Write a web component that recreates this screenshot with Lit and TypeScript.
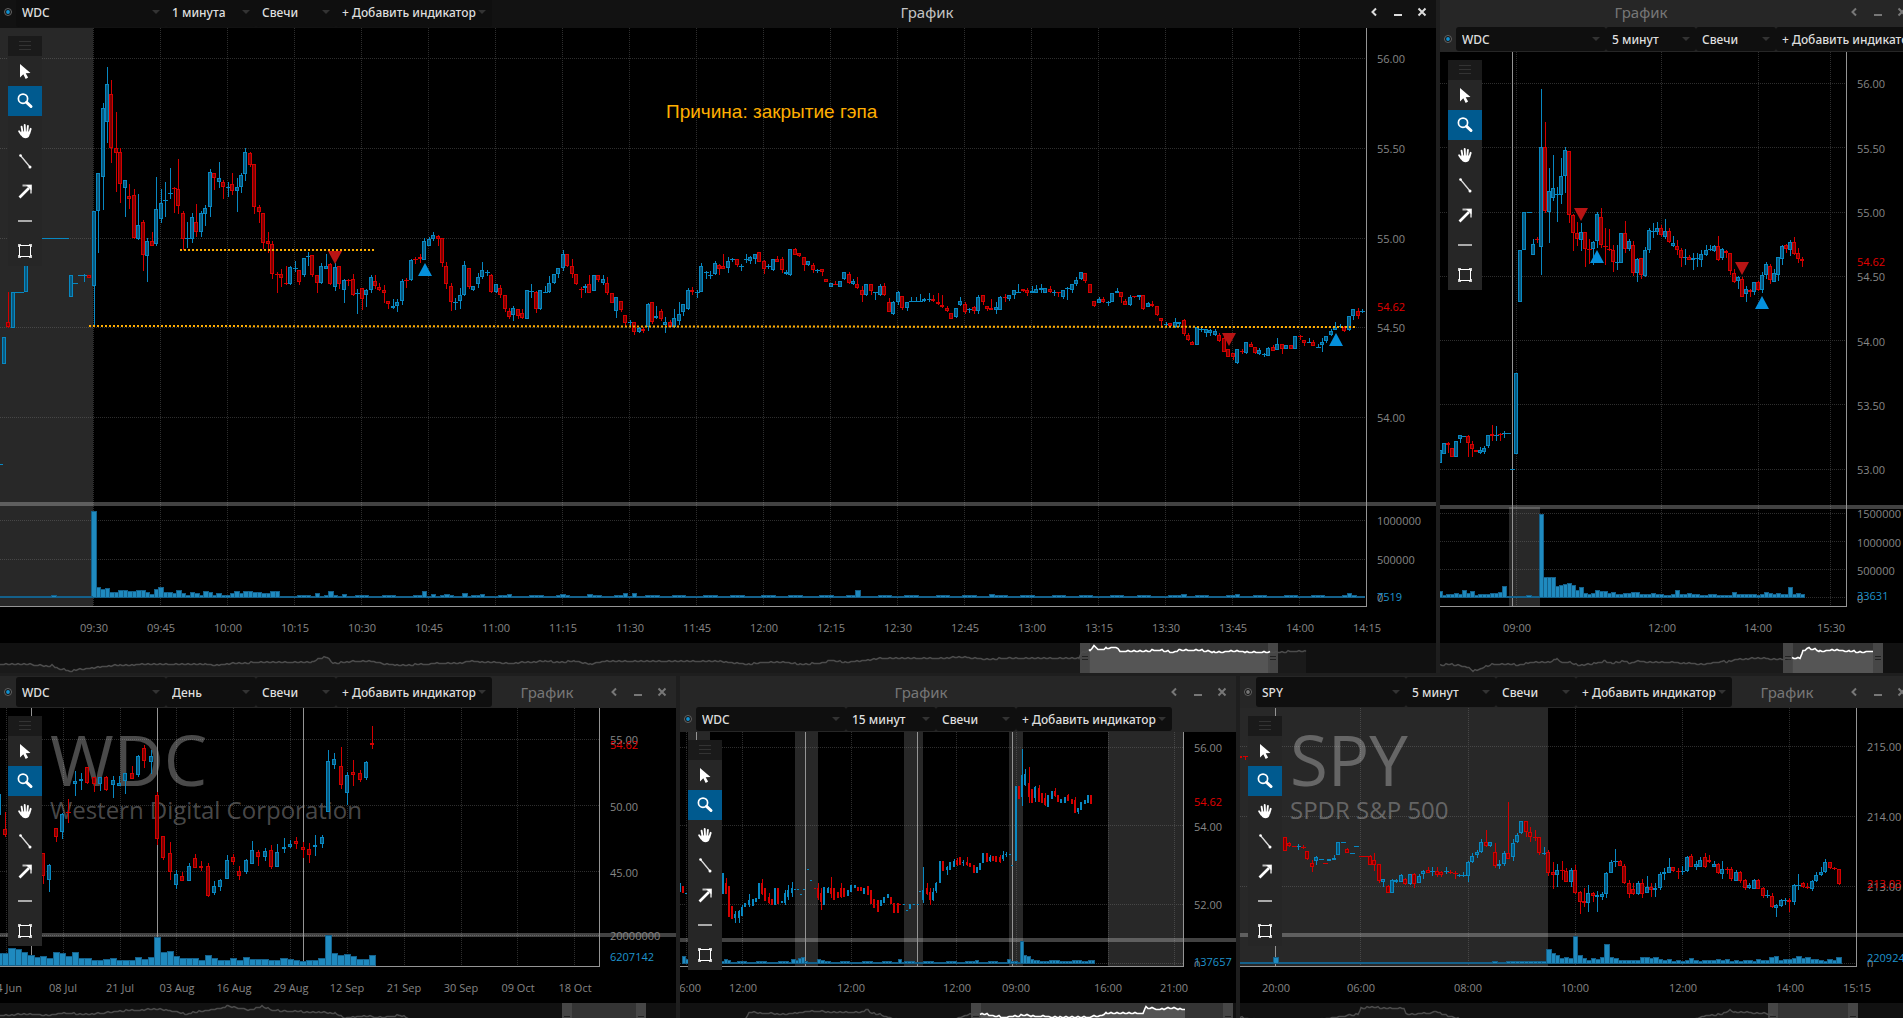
import { LitElement, html, svg, css, nothing } from "lit";
import { customElement, property } from "lit/decorators.js";
import { classMap } from "lit/directives/class-map.js";

type Bar = { x: number; up: boolean; top: number; bot: number; hi: number; lo: number };
type Label = { at: number; text: string; tone?: string };
type Marker = { x: number; y: number; up: boolean };

interface ChartSpec {
  symbol: string;
  company?: string;
  period: string;
  active?: boolean;
  linked: boolean;
  stacked?: boolean;
  left: number;
  top: number;
  width: number;
  height: number;
  axis: number;
  split: number;
  base: number;
  pitch: number;
  thin?: boolean;
  vlines: number[];
  hlines: number[];
  days: number[];
  sessions: [number, number, number?][];
  bars: Bar[];
  volume: [number, number][];
  prices: Label[];
  times: Label[];
  markers?: Marker[];
  levels?: [number, number, number, number][];
  note?: { x: number; y: number; text: string };
  nav: number[];
  range: [number, number];
}

/* Bars are written as "u|d top bottom high low", in thirds of a pixel. */
const third = (v: number) => Math.round(v / 3);

function parseBar(src: string, x: number, origin = 0): Bar {
  const up = src[0] === "u";
  const [t, b, h, l] = src.slice(1).trim().split(",").map(Number);
  const bottom = b ?? t + 3;
  return {
    x,
    up,
    top: origin + third(t),
    bot: origin + third(bottom),
    hi: origin + third(h ?? t),
    lo: origin + third(l ?? bottom),
  };
}

function series(src: string, start: number, step: number, origin = 0): Bar[] {
  return src
    .trim()
    .split(/\s+/)
    .map((s, i) => (s === "-" ? null : parseBar(s, Math.round(start + step * i), origin)))
    .filter((b): b is Bar => b !== null);
}

function placed(src: string, left: number, scale: number, origin: number): Bar[] {
  return src
    .trim()
    .split(/\s+/)
    .map((s) => {
      const [x, rest] = s.split(":");
      return parseBar(rest, Math.round(left + Number(x) / scale), origin);
    });
}

const volumes = (heights: number[], start: number, step: number): [number, number][] =>
  heights.map((h, i) => [start + step * i, h]);

const fill = (n: number, peaks: Record<number, number>, rest: (i: number) => number) =>
  Array.from({ length: n }, (_, i) => peaks[i] ?? rest(i));

const ripple = (i: number) => ((i * 7919) % 13 > 6 ? 2 : 1);

const MINUTE = `
u634,859,634,977 u520,634,520,758 u325,532,310,630 u253,365,202,430 d283,445,240,490 d445,460,336,575
d457,553,445,608 u541,563,541,650 d588,597,552,628 d586,713,568,718 u676,716,582,720 d667,764,660,812
u724,767,714,846 d724,737,696,738 u628,731,530,738 u610,656,567,668 u601,602,546,652 u580,581,504,597
d565,568,560,640 d568,617,478,642 d640,718,633,750 u715,716,667,744 u652,716,640,730 d667,697,612,710
u640,697,632,710 u625,643,614,678 u517,622,507,650 d520,535,520,570 u535,547,486,563 d547,562,541,597
u562,563,546,590 d553,574,520,584 u562,574,534,635 u526,562,520,578 u457,523,445,542 d460,496,456,502
d493,620,493,641 d622,635,615,668 d640,730,640,748 d722,731,696,759 d731,823,724,838 d823,826,815,879
d823,835,808,860 d850,853,797,854 u802,853,797,854 u803,805,783,815 d811,845,811,854 u775,826,775,832
u769,770,756,797 d766,826,766,832 d826,850,826,879 u799,850,788,851 u799,806,763,808 d791,853,790,854
u800,862,790,872 d799,853,799,866 u839,871,836,909 d839,841,836,858 d838,886,822,888 u880,882,866,941
d865,898,865,930 u871,886,868,921 u832,871,825,880 d844,859,825,866 d862,871,850,874 d871,880,855,909
d904,912,902,927 u919,925,898,926 u905,919,898,935 u842,904,838,915 d840,842,834,865 u779,841,777,843
d776,778,771,793 d770,778,762,790 u724,779,714,780 u716,737,710,738 u704,718,696,724 d709,716,705,738
d715,790,714,800 d797,853,785,866 d859,907,850,933 u905,907,894,930 u886,904,865,926 u796,886,784,887
d805,862,804,868 u859,871,858,873 u832,853,820,863 u811,830,786,838 u817,818,811,828 d826,877,823,879
u853,877,852,879 d865,886,856,893 d886,928,884,935 d934,952,925,956 u925,946,917,962 d928,947,927,958
d940,955,928,957 u871,956,870,957 u872,874,852,893 d875,926,874,940 u871,926,870,930 u875,878,858,880
u850,875,828,880 u823,850,822,852 u805,823,804,833 u763,805,750,812 d763,799,762,800 d799,823,777,833
d823,853,822,854 d868,871,860,893 u859,865,852,878 d853,878,825,879 u826,872,825,873 d826,841,825,846
u838,850,825,854 d850,878,830,886 d880,908,879,909 u892,934,891,953 d904,929,903,935 d946,970,944,979
u965,970,959,982 d967,995,966,1006 u985,995,980,1000 d988,993,982,1000 u913,982,908,994 d907,965,906,972
u947,955,918,957 d934,956,927,962 u966,974,952,998 d967,980,960,981 u955,982,927,983 u943,962,906,975
u913,935,912,948 u871,926,864,929 d871,877,862,886 u875,877,870,893 u799,875,789,876 u817,818,812,838
u825,826,812,838 u790,823,783,826 d796,806,792,825 d799,806,762,808 u784,805,771,818 u778,779,775,785
d778,796,777,800 u798,799,793,812 u778,780,762,790 u772,782,768,791 u763,778,762,791 d757,785,756,786
d784,806,780,822 u798,800,793,808 u778,811,777,812 d777,785,768,786 d778,811,771,820 u817,823,810,826
u748,826,747,827 d748,764,744,766 d760,769,759,770 d772,796,771,812 u784,796,783,797 d796,811,789,818
u811,812,808,818 d808,817,807,827 d838,845,837,846 u850,860,849,861 d852,853,843,856 u844,860,843,861
u817,838,816,839 d823,848,816,851 u844,851,837,854 d853,865,831,866 d871,886,857,906 u853,886,852,887
d853,874,852,886 u876,877,875,900 u859,886,852,887 d859,886,849,887 d907,935,893,936 u907,943,903,944
u877,907,873,914 d889,925,888,930 u907,925,906,933 u904,906,891,907 u904,905,892,906 u903,904,882,906
u898,904,893,906 u898,899,879,905 d898,904,885,906 d907,913,879,914 d915,922,885,924 d925,934,917,935
d940,956,938,957 u925,952,924,953 u904,916,891,918 d913,935,905,941 u927,928,923,938 d920,934,918,942
u892,934,886,942 d886,907,885,914 d919,926,918,932 d923,929,897,930 u920,929,906,942 u892,929,888,930
d891,893,882,906 u886,898,885,902 u871,886,870,898 u877,878,852,879 d868,873,867,876 d871,878,864,888
u874,878,858,879 u867,878,855,879 u865,871,852,878 u865,878,864,879 d868,875,858,879 u877,879,870,888
d877,879,876,892 u871,892,870,898 u865,866,861,900 u853,871,852,878 u841,853,831,858 u817,838,816,839
d820,842,819,849 d853,878,852,879 d904,919,903,920 u898,908,892,909 d898,907,891,908 u907,908,903,918
u880,905,879,906 u872,878,864,879 d877,892,876,908 d904,914,897,915 u892,916,886,917 d888,892,887,893
u886,892,885,901 d886,926,885,930 u910,920,905,921 d912,919,903,921 d919,946,918,947 d955,962,954,977
u972,973,965,980 d970,978,969,979 u967,982,954,983 u966,973,965,980 d961,1003,957,1008 d1006,1021,999,1022
d1026,1034,1023,1036 u982,1034,981,1035 u988,989,983,995 u988,1000,987,1010 u990,998,987,1007
u993,1006,988,1007 d1006,1024,1000,1026 d1015,1055,1010,1056 d1048,1070,1047,1071 d1060,1070,1059,1080
u1048,1088,1047,1091 d1054,1057,1047,1062 u1027,1058,1026,1062 d1032,1040,1026,1041 d1042,1060,1041,1061
u1051,1063,1045,1064 u1063,1064,1059,1071 u1045,1067,1041,1068 d1042,1052,1036,1054 u1033,1049,1014,1050
d1033,1046,1032,1062 u1036,1046,1035,1048 d1036,1046,1035,1047 u1009,1046,1008,1048 d1009,1012,1004,1020
d1021,1028,1020,1038 u1026,1028,1014,1029 d1027,1037,1020,1038 u1042,1043,1032,1044 u1027,1036,1015,1055
u1009,1022,1008,1028 u993,1006,987,1007 u980,989,966,990 u979,981,972,984 d980,994,978,995
u949,991,948,992 u928,948,927,960 d934,947,924,957 u933,935,928,939`;

const MINUTE_PRE = `0:u1392 12:u1010,1091 24:d966,981,876,984 39:u877,983 51:u877 62:u877 78:u716,877
129:u715 143:u715 157:u715 171:u715 185:u715 199:u715 213:u826,892 225:u850 240:u826 253:u826,828,823,845
267:d826,833`;

const FIVE = `
u1350,1388 u1330,1363 d1330,1336,1327,1360 d1343,1370 u1322,1372 u1306,1318,1306,1330 u1309
d1309,1330,1306,1370 d1333,1348,1322,1370 d1350,1357 u1349,1360,1342,1362 u1343,1355,1337,1362
u1306,1338,1306,1345 d1303,1308,1275,1322 u1306,1307,1278,1322 d1303,1306,1300,1322 u1300,1302,1294,1315
u1300 u1408 u1120,1361 u751,905 u637,751 u637 u733,764,718,765 d718,721,711,728
u442,740,268,826 d442,634,366,640 u574,637,504,728 u565,593,465,602 u583,584,561,665 u529,586,474,611
u451,527,442,578 d454,646,453,668 d646,700,643,752 d700,718,667,738 u697,719,669,752 d697,748,696,800
d746,749,718,792 u727,748,722,794 u643,724,637,744 d652,736,625,745 d739,741,684,795 d748,751,687,753
d751,787,736,815 u787,790,735,809 u700,788,699,790 d700,748,663,760 u724,746,716,752 d734,820,722,829
u778,820,774,846 d775,826,774,838 u751,829,740,830 u691,751,684,760 u693,694,669,715 u685,697,666,706
d685,706,675,712 u694,712,657,718 d694,727,685,728 u730,739,709,740 d739,751,721,766 d751,775,745,800
u771,773,748,794 d772,779,766,780 u773,781,760,809 u775,777,760,800 u763,779,751,800 u751,766,736,768
u747,749,736,754 u738,753,736,757 d738,781,708,782 u748,775,744,781 d752,760,750,775 d760,814,759,824
d820,845,808,848 u832,844,827,868 d838,890,832,891 u868,883,858,906 d871,877,867,890 u847,875,846,884
d847,871,844,872 u826,869,817,878 u793,826,787,836 d799,841,792,851 u820,845,806,846 u772,826,771,844
u739,778,736,794 d736,748,732,760 u727,751,720,768 d727,763,711,765 d760,778,744,790 d778,784,772,800`;

const DAY = `
u372,434,354,435 d477,495,427,500 - - - - - d549,618,549,642 u585,629,582,665 d475,500,473,515
u433,486,430,506 d426,430,387,459 u333,342,304,378 u327,332,309,360 d291,339,291,342 d322,342,322,366
u321,342,321,362 d322,359,318,364 u331,344,318,384 u339,347,318,348 u309,333,309,372 d309,327,288,328
u258,315,254,322 d234,273,225,293 u258,276,240,312 d375,507,365,525 d499,564,498,570 d549,606,516,629
u612,645,600,656 d618,632,606,633 u588,632,580,633 d564,594,552,595 d588,594,573,603 d588,678,579,681
u648,669,633,675 u630,651,627,663 u570,627,555,628 d561,576,552,585 d603,618,588,629 u570,606,567,611
u541,582,513,583 d546,561,540,588 u543,561,534,573 d541,591,525,597 u546,590,522,591 u531,538,504,549
u522,532,510,535 d513,522,501,536 d531,540,517,563 d537,555,520,578 u525,530,495,558 u501,522,494,534
u273,426,240,427 u267,285,249,297 d288,345,231,357 u315,369,306,404 d306,315,270,348 d309,330,300,335
u276,324,273,330 d219,225,168,237`;

const QUARTER = `28:u640,665 37:d648,670 44:u668 145:u609,672 154:d640,672,625,672 163:d648,740 171:d708,748
180:u733,744,722,758 189:u722,745,720,758 198:u710,738,706,738 207:u698,711 216:u690,706,672,710 227:u686,708
236:u684,695 245:u640,688 253:d640,672,627,674 262:d655,694 271:d680,700,668,702 280:d688,705 289:u655,705
297:d655,702 307:u694,700 316:u670,700,660,705 325:u660,680,645,690 335:u655,668,636,680 344:u658 353:u658
361:u671 370:u658 379:u598 388:u631 398:d655 407:d655,685,640,690 416:d668,695,655,720 425:u652,705
434:u655,668,650,670 443:d655,672,622,684 452:d655,690 462:d666,684 471:d655,680,640,684 480:d655,680
490:u660,678 499:u645,665 508:u645,655 517:d652,664 526:d652,664 535:u655,672 544:d648,675 553:d660,702
562:d688,715 571:d690,725 580:u690,708 590:u680,700 599:u672,684 608:d680,702 617:d700,728 626:d700,728
634:d702,706 643:u703 652:u720 661:u703,716 670:u703 681:u703 688:u664 697:u660,690,592,698
707:d655,672,640,674 716:d665,690,655,705 724:u665,690,655,692 733:u638,662,636,668 743:u574,640
752:d574,602 762:u590,600,588,614 771:u575,600 780:u572,590,566,592 789:d570,585,564,587 798:d560,584
807:u575,580,570,588 817:d575,584,560,588 826:d580,590 835:d585,608 844:u590,608 853:u578,600 862:u550,580
871:d550,575 880:u560,574,556,576 889:d558,572 898:d558,575 907:d560,575,556,578 916:u555,568,543,572
925:u553,555,545,560 934:u553 942:u586 952:u348,572 960:d348,388 968:u316,380,237,407 977:u312,345,297,347
988:d340,380,290,398 996:d356,398 1005:u350,385,348,396 1015:d355,396,345,396 1023:d370,400
1032:d385,405,368,408 1041:u375,410 1051:u362,388 1059:d362,378,354,380 1068:d376,396 1077:u388,400
1087:u380,398 1095:d375,392,372,394 1105:d386,402 1114:d390,428,380,430 1123:u414,426,414,433 1132:u396,420
1142:u390,402 1150:u375,398 1159:d374,402`;

const SPY_PRE = `
d502,544 d519,527,515,530 d529,532 u528,532,522,540 d530,532,526,536 d544,567,542,570 d580,592,570,605
u562,574,558,584 u568,570 d579,583 u566,572 u565,569,556,570 u517,556 u517 d538,548,535,549 u550 u529
d559 d559 d559,585,556,586 d570,585,548,602 d583,632,582,640 u628,635,626,650 d647,668,645,670
u629,668,626,669 u629,636,626,640 u615,635,612,637 d626,643,624,646 u613,643,612,646 d613,643,610,655
u617,638,612,640 u603,613,600,626 d600,608,590,610 u604,606,590,618 d602,616,590,620 d607,616,602,620
u604,606,590,612 d606,608,600,612 d608,612,603,626 u616,618,612,620 u614,618,606,620 u575,618,572,635
u557,575,550,579 u545,556,540,565 u517,547,508,549 d517,529,480,530 u517,529,515,532 d546,587,520,595
u581,587,570,596 u550,582,543,588 d550,566,396,567 u518,560,506,572 u496,516,490,520 u453,490,452,492
d453,486,452,500 d485,500,470,515 d500,503,480,512 d502,548,500,556 u548,550,530,555`;

const SPY_MAIN = `
d547,608,540,618 d606,614,575,657 u600,616,583,650 d600,603,573,629 d603,635,594,636 u600,635,593,650
d600,668,585,672 d667,696,662,732 d692,700,654,710 u670,700,644,725 d670,678,665,695 u676,680,662,725
u672,680,665,690 u608,672,605,683 u577,608,570,610 u573,576,538,590 d573,587,569,588 d587,640,583,641
d640,671,630,684 d657,672,640,676 u638,673,632,676 d638,671,627,684 u650,668,618,670 d650,660,640,682
u653,659,640,680 u613,655,606,660 u605,613,595,630 u592,608,565,610 d592,604,590,606 d603,606,593,628
u603,606,588,615 u562,604,558,606 d559,590,552,592 u583,590,572,601 u570,590,560,592 d562,590,550,594
d570,577,555,579 u583,590,572,592 d583,608,580,612 u598,611,572,628 d597,601,590,613 d598,628,592,634
u605,632,600,634 d606,632,603,640 d630,655,628,659 u645,655,640,658 u631,656,628,658 d631,656,628,657
d655,679,652,683 u675,679,660,684 d679,712,668,714 u705,713,703,740 u690,709,688,712 u690,692,683,705
d690,697,683,726 u645,697,643,706 u645,648,612,659 d640,652,635,654 d650,655,640,658 u633,656,630,663
u614,634,606,636 u606,614,592,618 u577,606,568,610 d577,594,575,596 d593,597,590,600 d598,641,596,645`;

const CHARTS: ChartSpec[] = [
  {
    symbol: "WDC", period: "1 минута", active: true, linked: true,
    left: 0, top: 28, width: 1367, height: 579, axis: 69, split: 502, base: 598, pitch: 4.467,
    vlines: Array.from({ length: 19 }, (_, i) => 93 + Math.round(i * 67)),
    hlines: [58, 148, 238, 327, 417, 520, 559],
    days: [],
    sessions: [[0, 93]],
    bars: [...placed(MINUTE_PRE, 0, 3, 0), ...series(MINUTE, 93.6, 4.467)],
    volume: [
      ...volumes(fill(21, { 12: 2 }, () => 1), 0, 4.467),
      ...volumes([86, 10, 8, 9, 5, 5, 7, 7, 6, 6, 7, 7, 5, 3, 8, 10, 5, 5, 4, 7, 4, 2, 5, 4, 2, 6, 5, 2, 4, 2, 2, 4, 6, 4, 6, 6, 5, 5, 4, 4, 6, 6], 93.6, 4.467),
      ...volumes(fill(243, { 8: 4, 11: 6, 14: 3, 32: 6, 34: 3, 37: 3, 41: 4, 45: 3, 51: 3, 63: 3, 69: 3, 77: 4, 79: 4, 129: 7, 159: 3, 202: 3, 214: 3, 239: 4 }, ripple), 281.2, 4.467),
    ],
    prices: [
      { at: 59, text: "56.00" }, { at: 149, text: "55.50" }, { at: 239, text: "55.00" },
      { at: 328, text: "54.50" }, { at: 418, text: "54.00" }, { at: 307, text: "54.62", tone: "red" },
      { at: 521, text: "1000000" }, { at: 560, text: "500000" }, { at: 598, text: "0" },
      { at: 597, text: "7519", tone: "blue" },
    ],
    times: ["09:30", "09:45", "10:00", "10:15", "10:30", "10:45", "11:00", "11:15", "11:30", "11:45", "12:00", "12:15", "12:30", "12:45", "13:00", "13:15", "13:30", "13:45", "14:00", "14:15"].map((text, i) => ({ at: 94 + i * 67, text })),
    markers: [
      { x: 335, y: 251, up: false }, { x: 425, y: 263, up: true },
      { x: 1229, y: 333, up: false }, { x: 1336, y: 333, up: true },
    ],
    levels: [[180, 250, 374, 250], [89, 326, 1355, 327]],
    note: { x: 666, y: 118, text: "Причина: закрытие гэпа" },
    nav: [0, 21, 30, 21, 38, 22, 50, 23, 53, 22, 58, 26, 64, 26, 70, 28, 80, 26, 92, 25, 105, 23, 120, 22, 150, 21, 205, 21, 215, 22, 235, 20, 265, 19, 312, 19, 320, 15, 327, 14, 333, 20, 345, 19, 355, 18, 372, 18, 385, 21, 405, 22, 440, 20, 460, 20, 470, 18, 490, 19, 510, 20, 545, 18, 560, 19, 575, 18, 590, 21, 605, 18, 720, 18, 735, 20, 750, 21, 765, 19, 785, 19, 800, 21, 822, 20, 830, 17, 845, 19, 860, 18, 880, 15, 935, 15, 965, 14, 985, 16, 1010, 15, 1079, 15, 1081, 10, 1090, 7, 1094, 3, 1100, 7, 1107, 5, 1116, 4, 1120, 8, 1140, 8, 1160, 7, 1173, 9, 1180, 7, 1200, 7, 1215, 9, 1237, 8, 1250, 9, 1278, 9, 1295, 8, 1306, 8],
    range: [1080, 1278],
  },
  {
    symbol: "WDC", period: "5 минут", linked: true, stacked: true,
    left: 1440, top: 52, width: 407, height: 555, axis: 69, split: 505, base: 598, pitch: 4.033,
    vlines: [1516, 1661, 1758, 1830],
    hlines: [83, 147, 212, 276, 340, 404, 469, 513, 541, 569, 597],
    days: [1512],
    sessions: [[1509, 1540, 507]],
    bars: series(FIVE, 1440, 4.023),
    volume: volumes(
      [6, 2, 3, 3, 4, 3, 7, 4, 6, 2, 3, 3, 3, 4, 4, 5, 11, 1, 1, 1, 1, 1, 2, 1, 1, 83, 20, 20, 20, 11, 12, 13, 14, 12, 7, 10, 4, 3, 4, 7, 6, 6, 4, 5, 3, 3, 4, 4, 5, 5, 3, 3, 3, 4, 3, 3, 2, 2, 3, 7, 3, 3, 4, 3, 3, 2, 2, 3, 3, 2, 2, 2, 2, 5, 3, 3, 3, 3, 3, 2, 3, 5, 4, 3, 4, 3, 3, 10, 3, 4, 3],
      1440, 4.023),
    prices: [
      { at: 84, text: "56.00" }, { at: 149, text: "55.50" }, { at: 213, text: "55.00" },
      { at: 277, text: "54.50" }, { at: 342, text: "54.00" }, { at: 406, text: "53.50" },
      { at: 470, text: "53.00" }, { at: 262, text: "54.62", tone: "red" },
      { at: 514, text: "1500000" }, { at: 543, text: "1000000" }, { at: 571, text: "500000" },
      { at: 599, text: "0" }, { at: 596, text: "33631", tone: "blue" },
    ],
    times: [{ at: 1517, text: "09:00" }, { at: 1662, text: "12:00" }, { at: 1758, text: "14:00" }, { at: 1831, text: "15:30" }],
    markers: [
      { x: 1581, y: 208, up: false }, { x: 1597, y: 250, up: true },
      { x: 1742, y: 262, up: false }, { x: 1762, y: 296, up: true },
    ],
    nav: [1440, 22, 1448, 21, 1465, 23, 1470, 25, 1473, 28, 1482, 25, 1492, 21, 1510, 21, 1520, 22, 1530, 19, 1550, 19, 1557, 15, 1560, 19, 1570, 19, 1578, 22, 1590, 21, 1605, 18, 1612, 20, 1625, 18, 1630, 20, 1636, 18, 1650, 19, 1670, 19, 1685, 20, 1705, 21, 1722, 18, 1727, 19, 1738, 16, 1760, 15, 1780, 16, 1788, 15, 1800, 15, 1803, 8, 1807, 5, 1815, 6, 1820, 8, 1835, 7, 1850, 8, 1860, 9, 1873, 8],
    range: [1783, 1883],
  },
  {
    symbol: "WDC", company: "Western Digital Corporation", period: "День", linked: true,
    left: 0, top: 708, width: 600, height: 259, axis: 76, split: 933, base: 966, pitch: 6.33,
    vlines: [6, 63, 120, 176, 233, 290, 347, 404, 461, 517, 574],
    hlines: [739, 805, 871, 935],
    days: [31, 157, 303],
    sessions: [],
    bars: series(DAY, -1.2, 6.33, 670),
    volume: volumes(
      [12, 12, 17, 16, 13, 10, 8, 9, 7, 13, 12, 9, 13, 7, 7, 5, 5, 6, 7, 5, 5, 5, 8, 6, 8, 28, 13, 14, 9, 7, 7, 7, 5, 10, 7, 5, 5, 7, 5, 8, 6, 6, 6, 5, 5, 7, 6, 5, 4, 5, 5, 7, 30, 12, 10, 11, 9, 6, 6, 10],
      -1.2, 6.33),
    prices: [
      { at: 740, text: "55.00" }, { at: 745, text: "54.62", tone: "red" }, { at: 807, text: "50.00" },
      { at: 873, text: "45.00" }, { at: 936, text: "20000000" }, { at: 957, text: "6207142", tone: "blue" },
    ],
    times: ["24 Jun", "08 Jul", "21 Jul", "03 Aug", "16 Aug", "29 Aug", "12 Sep", "21 Sep", "30 Sep", "09 Oct", "18 Oct"].map((text, i) => ({ at: 6 + Math.round(i * 56.9), text })),
    nav: [0, 12, 30, 11, 50, 12, 62, 10, 90, 11, 110, 9, 130, 7, 160, 6, 175, 8, 185, 11, 195, 9, 215, 6, 228, 3, 240, 5, 250, 7, 262, 3, 272, 7, 285, 8, 320, 9, 335, 10, 345, 15, 360, 13, 385, 14, 400, 12, 411, 16, 440, 24, 660, 25],
    range: [562, 646],
  },
  {
    symbol: "WDC", period: "15 минут", linked: true, stacked: true, thin: true,
    left: 680, top: 732, width: 504, height: 235, axis: 52, split: 938, base: 964, pitch: 3.22,
    vlines: [686, 742, 851, 956, 1016, 1108, 1174],
    hlines: [747, 825, 904, 963],
    days: [696, 805, 917, 1012],
    sessions: [[688, 710], [795, 818], [904, 923], [1009, 1023], [1108, 1183]],
    bars: placed(QUARTER, 670, 2.751, 670),
    volume: volumes(
      fill(128, { 0: 7, 1: 4, 13: 4, 14: 3, 34: 4, 35: 3, 36: 5, 37: 6, 42: 4, 43: 3, 67: 4, 91: 3, 101: 4, 105: 22, 106: 8, 107: 7, 108: 4, 109: 3, 116: 3, 126: 3 }, (i) => ripple(i) + (i > 109 ? 1 : 0)),
      683.5, 3.22),
    prices: [
      { at: 748, text: "56.00" }, { at: 802, text: "54.62", tone: "red" }, { at: 827, text: "54.00" },
      { at: 905, text: "52.00" }, { at: 965, text: "0" }, { at: 962, text: "137657", tone: "blue" },
    ],
    times: [
      { at: 687, text: "16:00" }, { at: 743, text: "12:00" }, { at: 851, text: "12:00" }, { at: 957, text: "12:00" },
      { at: 1016, text: "09:00" }, { at: 1108, text: "16:00" }, { at: 1174, text: "21:00" },
    ],
    nav: [680, 26, 730, 24, 745, 16, 750, 9, 765, 10, 785, 11, 810, 8, 840, 9, 862, 9, 866, 6, 872, 10, 880, 11, 890, 15, 920, 22, 955, 16, 970, 11, 985, 11, 995, 13, 1005, 14, 1025, 12, 1035, 13, 1060, 14, 1080, 14, 1100, 13, 1107, 10, 1143, 10, 1146, 4, 1150, 5, 1160, 6, 1170, 5, 1185, 6],
    range: [971, 1233],
  },
  {
    symbol: "SPY", company: "SPDR S&P 500", period: "5 минут", linked: false,
    left: 1240, top: 708, width: 617, height: 259, axis: 59, split: 933, base: 964, pitch: 4.466,
    vlines: [1360, 1468, 1575, 1682, 1789],
    hlines: [746, 816, 886, 963],
    days: [1275],
    sessions: [[1240, 1548]],
    bars: [
      ...placed("24:d258,264 34:d258,262,258,270", 1230, 2.33, 670),
      ...series(SPY_PRE, 1284.8, 4.466, 670),
      ...series(SPY_MAIN, 1548.3, 4.466, 670),
    ],
    volume: [
      ...volumes(fill(69, { 8: 6, 57: 2 }, (i) => (i > 59 ? 2 : 1)), 1240, 4.466),
      ...volumes([14, 10, 8, 5, 6, 5, 27, 8, 5, 3, 5, 4, 6, 19, 6, 5, 3, 3, 3, 3, 3, 6, 6, 5, 6, 4, 3, 4, 2, 3, 2, 3, 5, 3, 2, 3, 3, 3, 4, 3, 4, 2, 3, 2, 3, 3, 2, 4, 3, 3, 6, 7, 3, 4, 4, 5, 7, 5, 6, 4, 4, 3, 2, 4, 3, 6], 1548.3, 4.466),
    ],
    prices: [
      { at: 747, text: "215.00" }, { at: 817, text: "214.00" }, { at: 887, text: "213.00" },
      { at: 884, text: "213.03", tone: "red" }, { at: 964, text: "0" }, { at: 958, text: "220924", tone: "blue" },
    ],
    times: [
      { at: 1276, text: "20:00" }, { at: 1361, text: "06:00" }, { at: 1468, text: "08:00" }, { at: 1575, text: "10:00" },
      { at: 1683, text: "12:00" }, { at: 1790, text: "14:00" }, { at: 1857, text: "15:15" },
    ],
    nav: [1240, 14, 1250, 16, 1300, 19, 1337, 14, 1350, 12, 1358, 11, 1361, 5, 1370, 4, 1390, 5, 1404, 5, 1406, 11, 1430, 10, 1436, 8, 1448, 13, 1475, 19, 1560, 22, 1690, 19, 1702, 13, 1712, 12, 1722, 11, 1730, 7, 1735, 9, 1745, 9, 1760, 10, 1773, 11],
    range: [1768, 1858],
  },
];

const NAV_HEIGHT = 30;

/* Fills the gaps between navigator points with a small, repeatable flutter. */
function jagged(points: number[]): [number, number][] {
  const out: [number, number][] = [];
  for (let i = 0; i + 3 < points.length; i += 2) {
    const [x0, y0, x1, y1] = points.slice(i, i + 4);
    for (let x = x0; x < x1; x += 2) {
      const t = (x - x0) / (x1 - x0);
      const flutter = ((x * 37 + 11) % 17) / 17 > 0.7 ? -1 : 0;
      out.push([x, Math.round(y0 + (y1 - y0) * t) + flutter]);
    }
  }
  out.push([points[points.length - 2], points[points.length - 1]]);
  return out;
}

const TOOLS: { name: string; icon: unknown }[] = [
  { name: "Курсор", icon: svg`<path fill="#fff" d="M12 8v13.5l3.3-3.2 2.4 4.6 2.4-1.3-2.4-4.3 4.8-.2z"/>` },
  {
    name: "Масштаб",
    icon: svg`<circle cx="15" cy="12.7" r="4.6" fill="none" stroke="#fff" stroke-width="1.7"/>
      <path d="M18.6 16.3l4.4 4.2" stroke="#fff" stroke-width="3" stroke-linecap="round"/>`,
  },
  {
    name: "Перемещение",
    icon: svg`<path fill="#fff" d="M13 15.5h9l-.6 4c-.6 2-1.900 2.700-3.900 2.700s-3.300-1-4.200-2.700z"/>
      <path d="M13.4 18.600l-2.300-3.300M14.600 16.500l-1-5.700M17 16l-.3-7M19.300 16l.6-6M21.300 17.500l1.400-4.700" fill="none" stroke="#fff" stroke-width="1.900" stroke-linecap="round"/>`,
  },
  {
    name: "Отрезок",
    icon: svg`<path d="M12.5 9.5l9.5 11.500" stroke="#ddd" stroke-width="1.300"/>
      <circle cx="12.5" cy="9.5" r="1.3" fill="#fff"/><circle cx="22" cy="21" r="1.5" fill="#fff"/>`,
  },
  {
    name: "Стрелка",
    icon: svg`<path d="M11.5 21.5L21 12" stroke="#fff" stroke-width="2.6"/>
      <path d="M14.5 9.5h8.500v8" fill="none" stroke="#bbb" stroke-width="1.8"/>
      <path d="M18 9h5.500v5.500z" fill="#fff"/>`,
  },
  { name: "Горизонталь", icon: svg`<path d="M10 15h14" stroke="#aaa" stroke-width="2"/>` },
  {
    name: "Прямоугольник",
    icon: svg`<path d="M10 8h3v3h-3zM21 8h3v3h-3zM10 19h3v3h-3zM21 19h3v3h-3z" fill="#ccc"/>
      <path d="M11.5 9.500h11v11h-11z" fill="#262626" stroke="#fff"/>`,
  },
];

@customElement("tool-palette")
export class ToolPalette extends LitElement {
  static styles = css`
    :host { display: flex; flex-direction: column; width: 34px; background: #262626; }
    .grip { display: flex; flex-direction: column; justify-content: center; align-items: center; gap: 3px; height: 18px; padding-bottom: 2px; background: #1a1a1a; }
    .bar { width: 12px; height: 1px; background: #333; }
    .tool { display: block; width: 34px; height: 30px; padding: 0; border: 0; background: none; }
    .tool.on { background: #005a8f; }
    svg { display: block; width: 34px; height: 30px; }
  `;

  render() {
    return html`
      <div class="grip"><span class="bar"></span><span class="bar"></span><span class="bar"></span></div>
      ${TOOLS.map((t, i) => html`
        <button class=${classMap({ tool: true, on: i === 1 })} aria-label=${t.name} aria-pressed=${i === 1 ? "true" : "false"}>
          <svg viewBox="0 0 34 30">${t.icon}</svg>
        </button>`)}
    `;
  }
}

@customElement("chart-toolbar")
export class ChartToolbar extends LitElement {
  @property({ attribute: false }) spec!: ChartSpec;

  static styles = css`
    :host { display: flex; align-items: stretch; flex: none; font-family: "Noto Sans", "Open Sans", sans-serif; }
    .link { width: 16px; padding: 0; border: 0; background: none; display: grid; place-items: center; }
    .link svg { width: 10px; height: 10px; }
    .field { position: relative; display: flex; margin: 1px 0; background: #0f0f0f; border-radius: 3px; }
    .symbol { width: 150px; }
    .period { width: 90px; }
    .style { width: 80px; }
    .add { width: 156px; }
    select, .indicator {
      appearance: none; width: 100%; border: 0; padding: 0 18px 0 6px; background: none;
      color: #dedede; font: 500 12px "Noto Sans", "Open Sans", sans-serif; text-align: left; white-space: nowrap;
    }
    .arrow { position: absolute; right: 6px; top: 50%; width: 8px; height: 4px; margin-top: -2px; pointer-events: none; }
  `;

  private arrow() {
    return html`<svg class="arrow" viewBox="0 0 8 4"><path d="M0 0h8L4 4z" fill="#333"/></svg>`;
  }

  private pick(kind: string, name: string, value: string) {
    return html`<span class="field ${kind}">
      <select aria-label=${name}><option selected>${value}</option></select>${this.arrow()}
    </span>`;
  }

  render() {
    const s = this.spec;
    return html`
      <button class="link" aria-label="Связь окон">
        <svg viewBox="0 0 10 10">
          <circle cx="5" cy="5" r="3.5" fill="#111" stroke="#666"/>
          <circle cx="5" cy="5" r="1.9" fill=${s.linked ? "#1291d0" : "#777"}/>
        </svg>
      </button>
      ${this.pick("symbol", "Инструмент", s.symbol)}
      ${this.pick("period", "Период", s.period)}
      ${this.pick("style", "Вид графика", "Свечи")}
      <span class="field add"><button class="indicator">+ Добавить индикатор</button>${this.arrow()}</span>
    `;
  }
}

@customElement("chart-plot")
export class ChartPlot extends LitElement {
  @property({ attribute: false }) spec!: ChartSpec;

  static styles = css`
    :host { display: grid; grid-template-rows: 1fr 36px 30px; min-height: 0; flex: 1; background: #000; }
    .main { display: flex; min-height: 0; position: relative; }
    .plot { display: block; flex: 1; min-width: 0; height: 100%; }
    .axis { display: block; flex: none; height: 100%; }
    .times { display: block; width: 100%; height: 36px; }
    .nav { display: block; width: 100%; height: 30px; background: #111; }
    .label { font: 11px "Open Sans", "Noto Sans", sans-serif; fill: #868686; }
    .label.red { fill: #e00000; }
    .label.blue { fill: #1f93cc; }
    .mid { text-anchor: middle; }
    .grid { stroke: #808080; stroke-opacity: 0.36; stroke-dasharray: 1 1; fill: none; }
    .frame { stroke: #949494; fill: none; }
    .shade { fill: #282828; }
    .split { fill: #fff; fill-opacity: 0.26; }
    .up-line { stroke: #0888c2; fill: none; }
    .up-body { stroke: #0888c2; fill: #08587d; }
    .down-line { stroke: #d40000; fill: none; }
    .down-body { stroke: #d40000; fill: #7c0000; }
    .thin .up-body { fill: #0888c2; stroke: none; }
    .thin .down-body { fill: #d40000; stroke: none; }
    .vol { fill: #1f8abf; stroke: #14608a; }
    .level { stroke: #ffae00; stroke-width: 2; stroke-dasharray: 2 2; fill: none; }
    .sell { fill: #b81414; }
    .buy { fill: #0590dc; }
    .note { font: 19px "Liberation Sans", Arial, sans-serif; fill: #ffae00; }
    .mark { fill: #fff; fill-opacity: 0.29; font-family: "Open Sans", "Noto Sans", sans-serif; }
    .ticker { font-size: 69px; }
    .company { font-size: 24px; }
    .nav-area { fill: #1a1a1a; }
    .nav-line { fill: none; stroke: #4c4c4c; stroke-width: 1.4; }
    .nav-range { fill: #343434; }
    .nav-hot { fill: #555; }
    .nav-hot-line { fill: none; stroke: #fff; stroke-width: 1.6; }
    .nav-handle { fill: #484848; fill-opacity: 0.9; }
    .nav-grip { stroke: #222; }
    tool-palette { position: absolute; left: 8px; top: 8px; }
  `;

  private candles() {
    const s = this.spec;
    const path = { ul: "", ub: "", dl: "", db: "" };
    for (const b of s.bars) {
      const line = b.up ? "ul" : "dl";
      const body = b.up ? "ub" : "db";
      if (b.hi < b.top) path[line] += `M${b.x + 0.5} ${b.hi}V${b.top}`;
      if (b.lo > b.bot) path[line] += `M${b.x + 0.5} ${b.bot}V${b.lo}`;
      const h = b.bot - b.top;
      if (s.thin) path[body] += h > 1 ? `M${b.x - 1} ${b.top}h2v${h}h-2z` : `M${b.x - 1} ${b.top}h2v1h-2z`;
      else if (h <= 1) path[line] += `M${b.x - 2} ${b.top + 0.5}h5`;
      else path[body] += `M${b.x - 1.5} ${b.top + 0.5}h3v${h - 1}h-3z`;
    }
    return svg`
      <path class="up-line" d=${path.ul} /><path class="down-line" d=${path.dl} />
      <path class="up-body" d=${path.ub} /><path class="down-body" d=${path.db} />`;
  }

  private volume() {
    const s = this.spec;
    const d = s.volume
      .map(([x, h]) => {
        const a = Math.round(x - s.pitch / 2);
        const b = Math.round(x + s.pitch / 2);
        return `M${a + 0.5} ${s.base - h - 0.5}H${b + 0.5}V${s.base - 0.5}H${a + 0.5}z`;
      })
      .join("");
    return svg`<path class="vol" d=${d} />`;
  }

  private plot() {
    const s = this.spec;
    const right = s.left + s.width;
    const bottom = s.top + s.height;
    const grid =
      s.vlines.map((x) => `M${x + 0.5} ${s.top}V${bottom}`).join("") +
      s.hlines.map((y) => `M${s.left} ${y + 0.5}H${right}`).join("");
    return html`<svg class="plot" viewBox="${s.left} ${s.top} ${s.width} ${s.height}" preserveAspectRatio="none"
      role="img" aria-label="${s.symbol}, ${s.period}">
      <g shape-rendering="crispEdges" class=${s.thin ? "thin" : "wide"}>
        ${s.sessions.map(([a, b, y]) => svg`<rect class="shade" x=${a} y=${y ?? s.top} width=${b - a} height=${bottom - (y ?? s.top)} />`)}
        <path class="grid" d=${grid} />
        ${s.company
          ? svg`<g class="mark" shape-rendering="auto">
              <text class="ticker" x=${s.left + 50} y="786">${s.symbol}</text>
              <text class="company" x=${s.left + 50} y="819">${s.company}</text>
            </g>`
          : nothing}
        <rect class="split" x=${s.left} y=${s.split} width=${s.width} height="4" />
        ${s.days.map((x) => svg`<path class="frame" d="M${x + 0.5} ${s.top}V${bottom}" />`)}
        ${this.volume()} ${this.candles()}
        <path class="frame" d="M${right - 0.5} ${s.top}V${bottom - 0.5}H${s.left}" />
      </g>
      ${(s.levels ?? []).map(([x0, y0, x1, y1]) => svg`<path class="level" d="M${x0} ${y0}L${x1} ${y1}" />`)}
      ${(s.markers ?? []).map((m) => m.up
        ? svg`<path class="buy" d="M${m.x - 7} ${m.y + 13}h14l-7-13z" />`
        : svg`<path class="sell" d="M${m.x - 7} ${m.y}h14l-7 13z" />`)}
      ${s.note ? svg`<text class="note" x=${s.note.x} y=${s.note.y}>${s.note.text}</text>` : nothing}
    </svg>`;
  }

  private navigator() {
    const s = this.spec;
    const full = s.width + s.axis;
    const line = jagged(s.nav);
    const [a, b] = s.range;
    const draw = (pts: [number, number][]) => pts.map(([x, y], i) => `${i ? "L" : "M"}${x} ${y + 0.5}`).join("");
    const area = (pts: [number, number][]) =>
      pts.length ? `${draw(pts)}V${NAV_HEIGHT}H${pts[0][0]}z` : "";
    const hot = line.filter(([x]) => x >= a + 8 && x <= b - 8);
    const grip = (x: number) => svg`
      <rect class="nav-handle" x=${x} y="0" width="10" height="30" />
      <path class="nav-grip" d="M${x + 2} 13.5h6M${x + 2} 16.5h6" />`;
    return html`<svg class="nav" viewBox="${s.left} 0 ${full} 30" preserveAspectRatio="none" role="img" aria-label="Обзор периода">
      <path class="nav-area" d=${area(line)} />
      <rect class="nav-range" x=${a} y="0" width=${b - a} height="30" />
      <path class="nav-hot" d=${area(hot)} />
      ${grip(a)} ${grip(b - 10)}
      <path class="nav-line" d=${draw(line)} />
      <path class="nav-hot-line" d=${draw(hot)} />
    </svg>`;
  }

  render() {
    const s = this.spec;
    const pctY = (y: number) => `${((y - s.top) / s.height) * 100}%`;
    const pctX = (x: number) => `${((x - s.left) / (s.width + s.axis)) * 100}%`;
    return html`
      <div class="main">
        ${this.plot()}
        <svg class="axis" width=${s.axis}>
          <rect class="split" x="0" y=${pctY(s.split)} width="100%" height="4" />
          ${s.prices.map((p) => svg`<text class="label ${p.tone ?? ""}" x="10" dy="4" y=${pctY(p.at)}>${p.text}</text>`)}
        </svg>
        <tool-palette></tool-palette>
      </div>
      <svg class="times">
        ${s.times.map((t) => svg`<text class="label mid" x=${pctX(t.at)} y="25">${t.text}</text>`)}
      </svg>
      ${this.navigator()}
    `;
  }
}

@customElement("chart-window")
export class ChartWindow extends LitElement {
  @property({ attribute: false }) spec!: ChartSpec;

  static styles = css`
    :host { display: flex; min-width: 0; min-height: 0; }
    .window { display: flex; flex-direction: column; flex: 1; min-width: 0; border: solid #1e1e1e; border-width: 0 4px 3px 0; overflow: hidden; }
    .bar { box-sizing: border-box; display: flex; height: 32px; flex: none; background: #262626; }
    .stacked .bar { height: 30px; padding-top: 2px; }
    .active .bar { background: #121212; }
    .tools { display: flex; height: 26px; flex: none; background: #262626; }
    .title { flex: 1; display: flex; align-items: center; justify-content: center; margin: 0; min-width: 0;
      color: #777; font: 400 15px "Noto Sans", "Open Sans", sans-serif; }
    .active .title { color: #c4c4c4; }
    .controls { display: flex; padding-right: 2px; }
    .control { width: 24px; padding: 0; border: 0; background: none; display: grid; place-items: center; color: #777; }
    .active .control { color: #dcdcdc; }
    .control svg { width: 12px; height: 12px; fill: none; stroke: currentColor; stroke-width: 2; }
  `;

  render() {
    const s = this.spec;
    const toolbar = html`<chart-toolbar .spec=${s}></chart-toolbar>`;
    return html`
      <section class=${classMap({ window: true, active: !!s.active, stacked: !!s.stacked })}>
        <header class="bar">
          ${s.stacked ? nothing : toolbar}
          <h2 class="title">График</h2>
          <div class="controls">
            <button class="control" aria-label="Назад"><svg viewBox="0 0 12 12"><path d="M8 2.5L4.5 6 8 9.5"/></svg></button>
            <button class="control" aria-label="Свернуть"><svg viewBox="0 0 12 12"><path d="M2 9h8"/></svg></button>
            <button class="control" aria-label="Закрыть"><svg viewBox="0 0 12 12"><path d="M2.5 2.5l7 7M9.5 2.5l-7 7"/></svg></button>
          </div>
        </header>
        ${s.stacked ? html`<div class="tools">${toolbar}</div>` : nothing}
        <chart-plot .spec=${s}></chart-plot>
      </section>
    `;
  }
}

@customElement("app-root")
export class AppRoot extends LitElement {
  static styles = css`
    :host { display: block; height: 100vh; overflow: hidden; background: #000; }
    .desktop { display: grid; grid-template-rows: 680fr 360fr; width: calc(100% + 17px); height: calc(100vh + 22px); margin-top: -4px; }
    .row { display: grid; min-height: 0; }
    .upper { grid-template-columns: minmax(0, 1440fr) minmax(0, 480fr); }
    .lower { grid-template-columns: minmax(0, 680fr) minmax(0, 560fr) minmax(0, 680fr); }
  `;

  render() {
    const win = (c: ChartSpec) => html`<chart-window .spec=${c}></chart-window>`;
    return html`
      <main class="desktop">
        <div class="row upper">${CHARTS.slice(0, 2).map(win)}</div>
        <div class="row lower">${CHARTS.slice(2).map(win)}</div>
      </main>
    `;
  }
}
